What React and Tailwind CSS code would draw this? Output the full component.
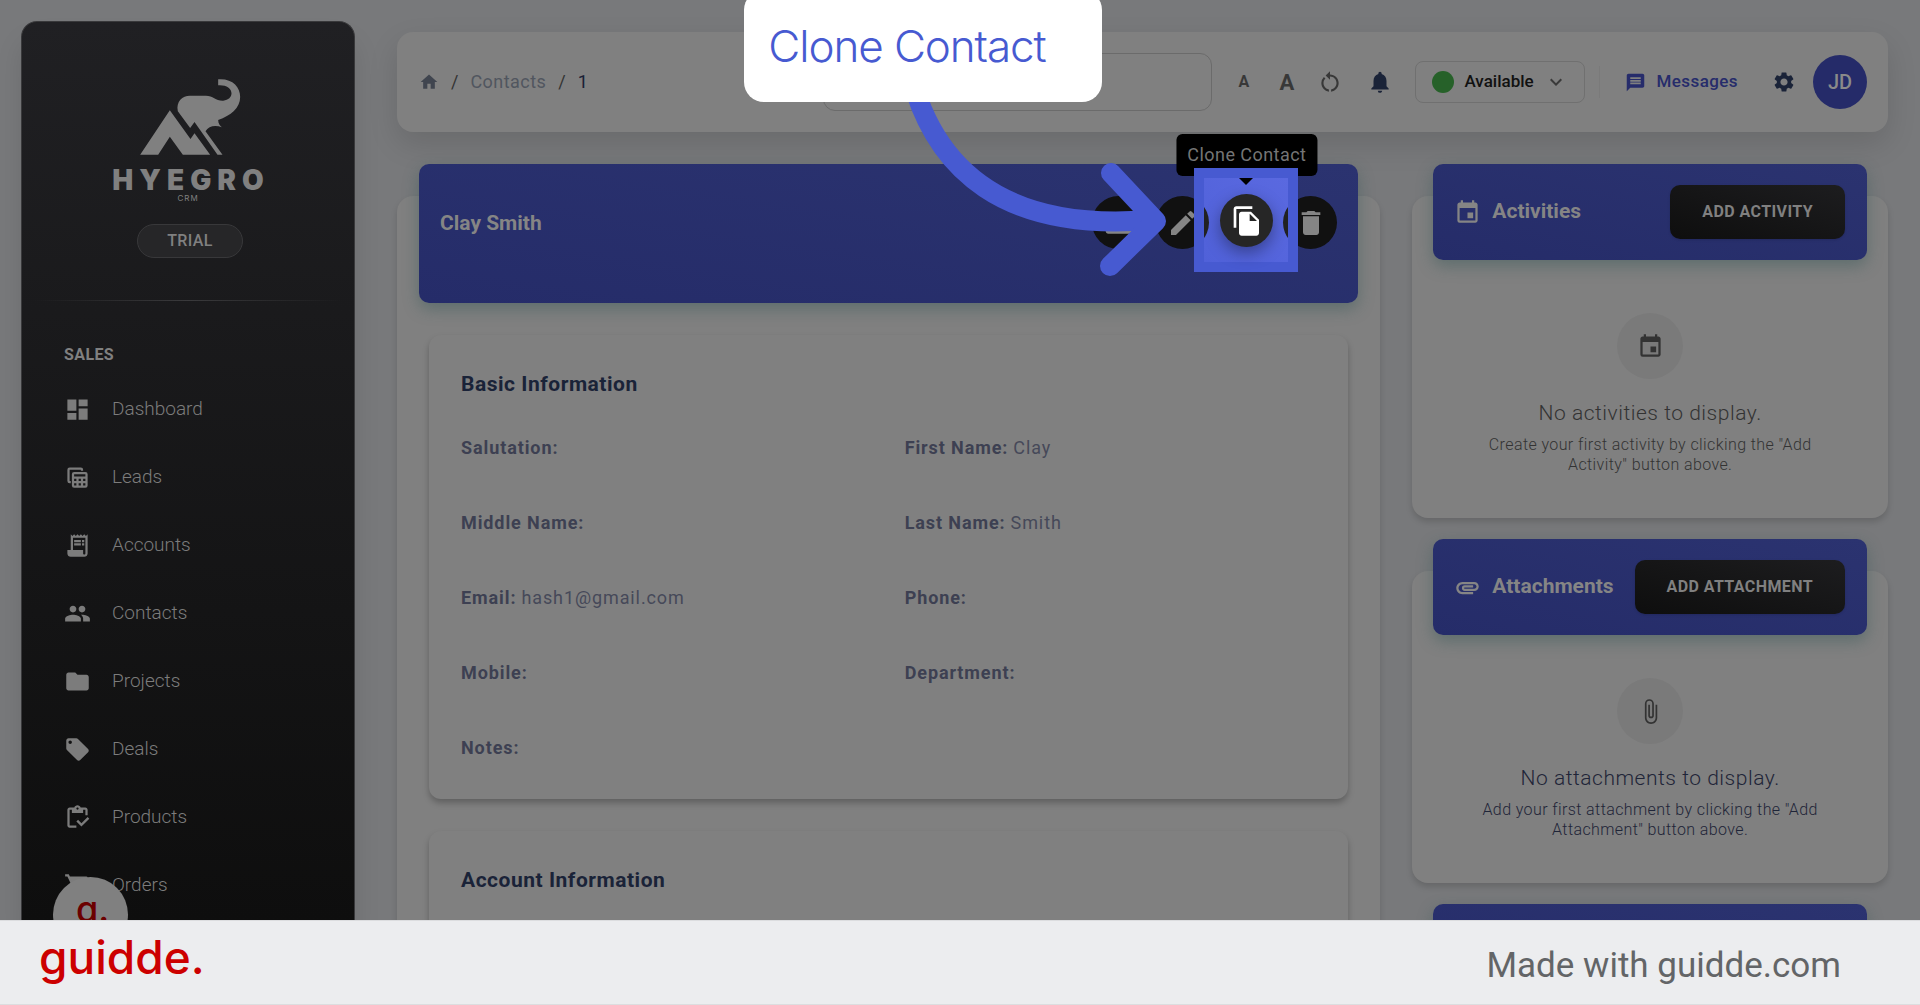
import React, { useState } from 'react'
import {
    MdAttachFile,
    MdAttachment,
    MdDashboard,
    MdDelete,
    MdEdit,
    MdEmail,
    MdEvent,
    MdExpandMore,
    MdFileCopy,
    MdFolder,
    MdHome,
    MdLocalOffer,
    MdMessage,
    MdNotifications,
    MdOutlineInventory,
    MdPeople,
    MdReceiptLong,
    MdRestartAlt,
    MdSettings,
    MdShoppingCart,
} from 'react-icons/md'

const LeadsIcon = ({ className }) => (
    <svg className={className} viewBox="0 0 24 24" fill="currentColor" aria-hidden="true">
        <path d="M3 5a2 2 0 0 1 2-2h10a2 2 0 0 1 2 2v1h-2V5H5v10h1v2H5a2 2 0 0 1-2-2z" />
        <path fillRule="evenodd" d="M9 7h10a2 2 0 0 1 2 2v10a2 2 0 0 1-2 2H9a2 2 0 0 1-2-2V9a2 2 0 0 1 2-2zm0 2v2h10V9zm0 4v2h2v-2zm4 0v2h2v-2zm4 0v2h2v-2zm-8 4v2h2v-2zm4 0v2h2v-2zm4 0v2h2v-2z" />
    </svg>
)

const navItems = [
    { label: 'Dashboard', icon: MdDashboard },
    { label: 'Leads', icon: LeadsIcon },
    { label: 'Accounts', icon: MdReceiptLong },
    { label: 'Contacts', icon: MdPeople },
    { label: 'Projects', icon: MdFolder },
    { label: 'Deals', icon: MdLocalOffer },
    { label: 'Products', icon: MdOutlineInventory },
    { label: 'Orders', icon: MdShoppingCart },
]

const basicInfo = [
    { label: 'Salutation', value: '' },
    { label: 'First Name', value: 'Clay' },
    { label: 'Middle Name', value: '' },
    { label: 'Last Name', value: 'Smith' },
    { label: 'Email', value: 'hash1@gmail.com' },
    { label: 'Phone', value: '' },
    { label: 'Mobile', value: '' },
    { label: 'Department', value: '' },
    { label: 'Notes', value: '' },
]

const Logo = () => (
    <div className="flex flex-col items-center text-[#808080]">
        <svg className="ml-1 h-[78px] w-[103px]" viewBox="420 235 308 234" fill="currentColor" aria-hidden="true">
            <path d="M423 465 L512 332 L574 418 L586 401 L633 465 H551 L512 411 L477 465Z" />
            <path d="M657 239 C700 236 723 262 723 292 C723 325 695 348 657 361 C657 372 663 378 668 383 C650 375 628 378 619 395 L670 465 H655 L586 367 L573 385 L536 335 C530 305 550 288 572 288 H620 C642 288 650 304 672 303 C688 302 697 292 697 281 C697 266 680 255 657 257Z" />
        </svg>
        <div className="mt-3 pl-[6px] font-['Inter'] text-[28px] leading-6 font-black tracking-[6px]">HYEGRO</div>
        <div className="font-['Inter'] text-[8px] leading-3 tracking-[1px]">CRM</div>
    </div>
)

const Sidebar = () => (
    <aside className="mt-[21px] ml-[21px] w-[334px] shrink-0 rounded-t-2xl border border-b-0 border-[#39393b] bg-gradient-to-b from-[#202023] to-[#0e0e0e] shadow-[0_20px_27px_rgba(0,0,0,0.1)]">
        <div className="flex flex-col items-center pt-14">
            <Logo />
            <span className="mt-5 ml-1 rounded-full border border-[#38383a] bg-[#262628] px-[29px] py-1 text-base leading-6 font-medium tracking-wide text-[#808080]">
                TRIAL
            </span>
        </div>
        <div className="mx-3 mt-[42px] h-px bg-gradient-to-r from-transparent via-[#3a3a3c] to-transparent" />
        <h2 className="mt-[42px] ml-[42px] text-base leading-6 font-bold tracking-wide text-[#808080]">SALES</h2>
        <nav className="mt-2">
            {navItems.map(({ label, icon: Icon }) => (
                <a key={label} href="#" className="flex h-[68px] items-center gap-[21px] pl-[42px] text-[#7c7c7c]">
                    <Icon className="size-[27px]" />
                    <span className="text-[19px] font-light">{label}</span>
                </a>
            ))}
        </nav>
    </aside>
)

const TopBar = () => {
    const [search, setSearch] = useState('')

    return (
        <header className="flex h-[100px] items-center justify-between rounded-2xl bg-[#808080] pr-[21px] pl-[22px] shadow-[0_12px_30px_rgba(0,0,0,0.12)]">
            <nav aria-label="Breadcrumb" className="flex items-center gap-3 text-lg text-[#40454f]">
                <a href="#" aria-label="Home"><MdHome className="size-5" /></a>
                <span className="text-[#333333]">/</span>
                <a href="#" className="tracking-wide text-[#51565f]">Contacts</a>
                <span className="text-[#333333]">/</span>
                <span className="text-[#1a2035]">1</span>
            </nav>
            <div className="flex items-center">
                <input
                    aria-label="Search"
                    value={search}
                    onChange={(e) => setSearch(e.target.value)}
                    className="h-[58px] w-[389px] rounded-xl border border-[#6b6b6b] bg-transparent px-4 outline-none"
                />
                <div className="ml-[10px] flex items-center font-bold text-[#383838]">
                    <button aria-label="Smaller text" className="w-[43px] text-base">A</button>
                    <button aria-label="Larger text" className="w-[43px] text-[22px]">A</button>
                    <button aria-label="Reset text size" className="flex w-[43px] justify-center"><MdRestartAlt className="size-[26px]" /></button>
                </div>
                <button aria-label="Notifications" className="ml-4 text-[#1a2338]"><MdNotifications className="size-[26px]" /></button>
                <div className="ml-[22px] flex h-[42px] w-[170px] items-center rounded-lg border border-[#707070] pl-4">
                    <span className="size-[22px] rounded-full bg-[#266129]" />
                    <select aria-label="Status" className="ml-[10px] appearance-none bg-transparent text-[17px] font-medium text-[#111111] outline-none">
                        <option>Available</option>
                    </select>
                    <MdExpandMore className="ml-[10px] size-6 text-[#3a3a3a]" />
                </div>
                <div className="ml-[14px] h-8 w-px bg-[#7a7a7a]" />
                <a href="#" className="ml-[25px] flex items-center gap-[10px] text-[17px] font-medium tracking-wide text-[#262c6b]">
                    <MdMessage className="size-[21px]" />
                    Messages
                </a>
                <button aria-label="Settings" className="ml-[34px] text-[#1a2338]"><MdSettings className="size-6" /></button>
                <button className="ml-[17px] size-[54px] rounded-full bg-[#252b69] text-xl font-medium text-[#8a8a8a]">JD</button>
            </div>
        </header>
    )
}

// spotlight, tooltip, arrow and callout pinned around the clone button
const CloneGuide = () => (
    <div>
        <div className="absolute -top-[62px] left-1/2 -translate-x-1/2 rounded-md bg-black px-[11px] py-2 text-lg leading-[26px] tracking-wide whitespace-nowrap text-[#757575]">
            Clone Contact
        </div>
        <div className="absolute -top-7 -left-[26px] size-[104px] overflow-hidden border-[10px] border-[#475ad1] bg-gradient-to-tr from-[#5061d9] to-[#5a69e0]">
            <div className="absolute top-[18px] -left-[48px] size-[53px] rounded-full bg-[#222222]" />
            <div className="absolute top-[18px] -right-[48px] size-[53px] rounded-full bg-[#222222]" />
            <div className="mx-auto size-0 border-x-[7px] border-t-[7px] border-x-transparent border-t-black" />
        </div>
        <svg className="pointer-events-none absolute -top-[196px] -left-[476px] h-[300px] w-[440px] text-[#475ad1]" viewBox="745 0 440 300" fill="none" stroke="currentColor" strokeWidth="20" strokeLinecap="round" strokeLinejoin="round" aria-hidden="true">
            <path d="M916 90 C940 165 1000 232 1150 220" />
            <path d="M1112 173 L1157 221 L1111 266" />
        </svg>
        <div className="absolute -top-[206px] -left-[476px] h-[112px] w-[358px] rounded-[20px] bg-white pt-[26px] pl-6 font-['Inter'] text-[44px] leading-[60px] font-light tracking-tight whitespace-nowrap text-[#475ad1]">
            Clone Contact
        </div>
    </div>
)

const ContactActions = () => (
    <div className="flex gap-[11px] text-[#858585]">
        <button aria-label="Email" className="flex size-[53px] items-center justify-center rounded-full bg-[#111111]"><MdEmail className="size-8" /></button>
        <button aria-label="Edit" className="flex size-[53px] items-center justify-center rounded-full bg-[#111111]"><MdEdit className="size-8" /></button>
        <div className="relative z-10 size-[53px]">
            <CloneGuide />
            <button aria-label="Clone Contact" className="relative flex size-[53px] -translate-y-[2px] items-center justify-center rounded-full bg-[#262626] text-white shadow-[0_6px_16px_rgba(0,0,0,0.35)]">
                <MdFileCopy className="size-8" />
            </button>
        </div>
        <button aria-label="Delete" className="flex size-[53px] items-center justify-center rounded-full bg-[#111111]"><MdDelete className="size-8" /></button>
    </div>
)

const InfoCard = ({ title, fields }) => (
    <section className="rounded-xl bg-[#808080] px-8 pt-[33px] pb-[38px] shadow-[0_4px_6px_rgba(0,0,0,0.25)]">
        <h3 className="text-[21px] leading-8 font-bold tracking-wide text-[#1a2338]">{title}</h3>
        <dl className="mt-[34px] grid grid-cols-2 gap-x-8 gap-y-12 text-lg leading-[27px] tracking-wider">
            {fields.map((field) => (
                <div key={field.label} className="flex gap-[5px]">
                    <dt className="font-bold text-[#3d4052]">{field.label}:</dt>
                    <dd className="text-[#464959]">{field.value}</dd>
                </div>
            ))}
        </dl>
    </section>
)

const SideCard = ({ title, icon: Icon, action, children }) => (
    <section className="rounded-2xl bg-[#808080] px-[21px] pb-[43px] shadow-[0_4px_6px_rgba(0,0,0,0.15)]">
        <div className="-mt-8 flex h-24 items-center justify-between rounded-[10px] bg-gradient-to-tr from-[#252c69] to-[#2b3370] pr-[22px] pl-[21px] shadow-[0_6px_16px_rgba(40,80,80,0.4)]">
            <h3 className="flex items-center gap-[11px] text-[21px] font-bold text-[#858585]">
                <Icon className="size-[27px]" />
                {title}
            </h3>
            <button className="h-[54px] rounded-[10px] bg-gradient-to-tr from-[#0e0e0e] to-[#1d1d1f] px-8 text-base font-bold tracking-wide text-[#808080] shadow">
                {action}
            </button>
        </div>
        {children}
    </section>
)

const EmptyState = ({ icon: Icon, title, text, className }) => (
    <div className={className}>
        <div className="mx-auto flex size-[66px] items-center justify-center rounded-full bg-[#7a7a7a]">
            <Icon className="size-[27px] text-[#333333]" />
        </div>
        <p className="mt-5 text-[21px] leading-7 font-light tracking-wide">{title}</p>
        <p className="mx-auto mt-2 max-w-[350px] text-base leading-5 font-light tracking-wide">{text}</p>
    </div>
)

const Footer = () => (
    <footer className="z-20 flex h-[85px] shrink-0 items-center justify-between border-y border-[#dcdddf] bg-[#ecedef] pr-[79px] pl-[39px]">
        <a href="#" className="pb-3 font-['Inter'] text-[46px] leading-[60px] font-medium text-[#cc0000]">guidde.</a>
        <span className="pt-2 text-[35px] text-[#636567]">Made with guidde.com</span>
    </footer>
)

const App = () => {
    return (
        <div className="flex h-screen flex-col bg-[#78797b] font-['Roboto',sans-serif]">
            <div className="relative flex min-h-0 flex-1 overflow-hidden">
                <Sidebar />
                <main className="min-w-0 flex-1 pt-8 pr-8 pl-[42px]">
                    <TopBar />
                    <div className="mt-16 grid grid-cols-3 items-start gap-8">
                        <div className="col-span-2 rounded-2xl bg-[#808080] pb-8 shadow-[0_4px_6px_rgba(0,0,0,0.15)]">
                            <div className="relative mx-[22px] -mt-8 flex h-[139px] items-start justify-between rounded-[10px] bg-gradient-to-tr from-[#252c69] to-[#2b3370] px-[21px] pt-8 shadow-[0_6px_16px_rgba(40,80,80,0.4)]">
                                <h1 className="pt-3 text-[21px] leading-[30px] font-bold text-[#858585]">Clay Smith</h1>
                                <ContactActions />
                            </div>
                            <div className="mt-8 flex flex-col gap-8 px-8">
                                <InfoCard title="Basic Information" fields={basicInfo} />
                                <InfoCard title="Account Information" fields={[]} />
                            </div>
                        </div>
                        <div className="flex flex-col gap-[53px]">
                            <SideCard title="Activities" icon={MdEvent} action="ADD ACTIVITY">
                                <EmptyState
                                    icon={MdEvent}
                                    title="No activities to display."
                                    text={'Create your first activity by clicking the "Add Activity" button above.'}
                                    className="pt-[53px] text-center text-[#333333]"
                                />
                            </SideCard>
                            <SideCard title="Attachments" icon={MdAttachment} action="ADD ATTACHMENT">
                                <EmptyState
                                    icon={MdAttachFile}
                                    title="No attachments to display."
                                    text={'Add your first attachment by clicking the "Add Attachment" button above.'}
                                    className="pt-[43px] text-center text-[#1f2538]"
                                />
                            </SideCard>
                            <SideCard title="" icon={MdEvent} action="" />
                        </div>
                    </div>
                </main>
                <button aria-label="Open guidde" className="absolute -bottom-8 left-[53px] size-[75px] rounded-full bg-[#808080] pb-3 pl-1 font-['Inter'] text-[36px] leading-none font-medium text-[#6b0000]">
                    g.
                </button>
            </div>
            <Footer />
        </div>
    )
}

export default App
